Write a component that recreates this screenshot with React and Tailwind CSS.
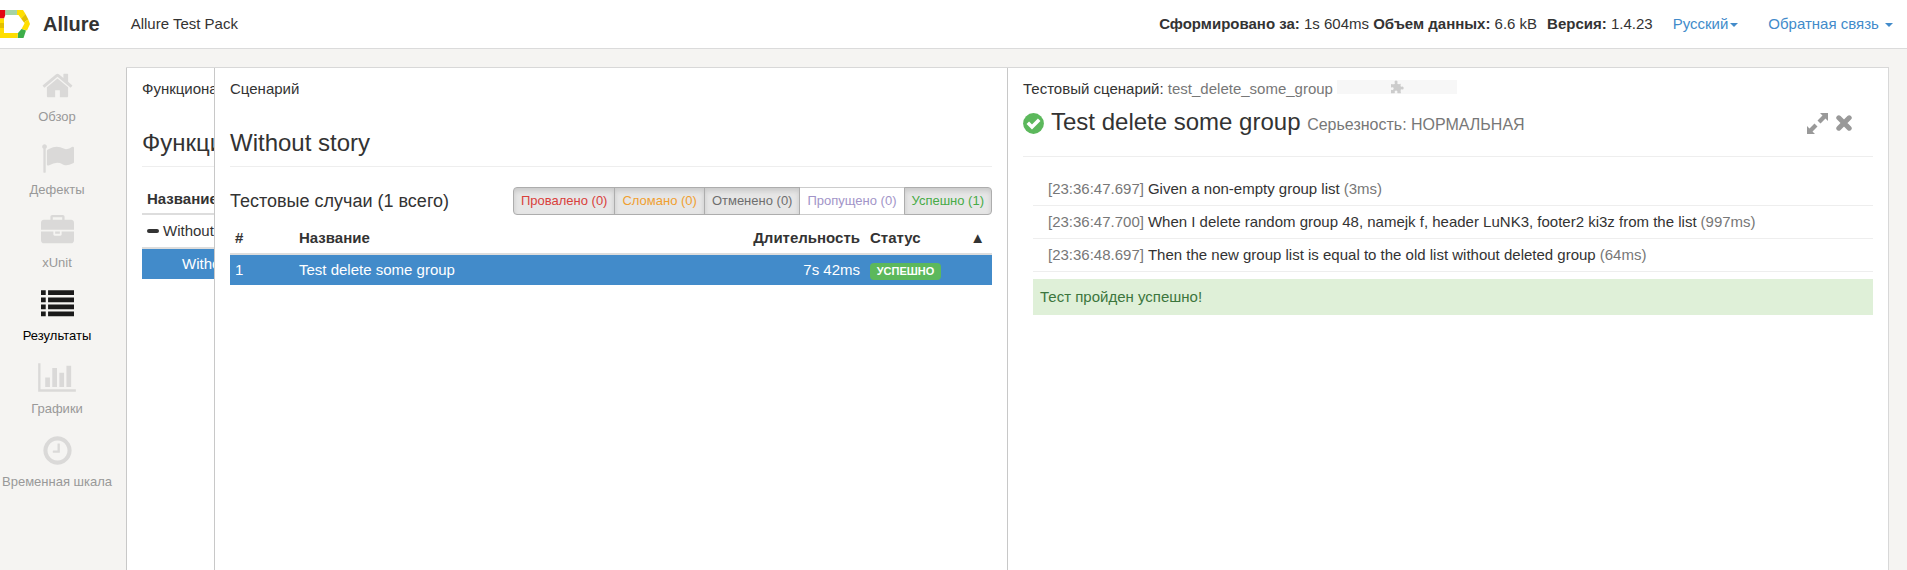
import React from "react";

const HOME = "M1472 992v480q0 26-19 45t-45 19h-384v-384h-256v384h-384q-26 0-45-19t-19-45v-480q0-1 .5-3t.5-3l575-474 575 474q1 2 1 6zm223-69l-62 74q-8 9-21 11h-3q-13 0-21-7l-692-577-692 577q-12 8-24 7-13-2-21-11l-62-74q-8-10-7-23.5t11-21.5l719-599q32-26 76-26t76 26l244 204v-195q0-14 9-23t23-9h192q14 0 23 9t9 23v408l219 182q10 8 11 21.5t-7 23.5z";
const FLAG = "M320 256q0 72-64 110v1266q0 13-9.5 22.5t-22.5 9.5h-64q-13 0-22.5-9.5t-9.5-22.5v-1266q-64-38-64-110 0-53 37.5-90.5t90.5-37.5 90.5 37.5 37.5 90.5zm1472 64v763q0 25-12.5 38.5t-39.5 27.5q-215 116-369 116-61 0-123.5-22t-108.5-48-115.5-48-142.5-22q-192 0-464 146-17 9-33 9-26 0-45-19t-19-45v-742q0-32 31-55 21-14 79-43 236-120 421-120 107 0 200 29t219 88q38 19 88 19 54 0 117.5-21t110-47 88-47 54.5-21q26 0 45 19t19 45z";
const CASE = "M640 256h512v-128h-512v128zm1152 640v480q0 66-47 113t-113 47h-1472q-66 0-113-47t-47-113v-480h672v160q0 26 19 45t45 19h320q26 0 45-19t19-45v-160h672zm-768 0v128h-256v-128h256zm768-480v384h-1792v-384q0-66 47-113t113-47h352v-160q0-40 28-68t68-28h576q40 0 68 28t28 68v160h352q66 0 113 47t47 113z";
const LIST = "M0 128h256v256h-256zM384 128h1408v256h-1408zM0 512h256v256h-256zM384 512h1408v256h-1408zM0 896h256v256h-256zM384 896h1408v256h-1408zM0 1280h256v256h-256zM384 1280h1408v256h-1408z";
const CHART = "M640 896v512h-256v-512h256zm384-512v1024h-256v-1024h256zm1024 1152v128h-2048v-1536h128v1408h1920zm-640-896v768h-256v-768h256zm384-384v1152h-256v-1152h256z";
const CLOCK = "M1024 544v448q0 14-9 23t-23 9h-320q-14 0-23-9t-9-23v-64q0-14 9-23t23-9h224v-352q0-14 9-23t23-9h64q14 0 23 9t9 23zm416 352q0-148-73-273t-198-198-273-73-273 73-198 198-73 273 73 273 198 198 273 73 273-73 198-198 73-273zm224 0q0 209-103 385.5t-279.5 279.5-385.5 103-385.5-103-279.5-279.5-103-385.5 103-385.5 279.5-279.5 385.5-103 385.5 103 279.5 279.5 103 385.5z";

const NAV = [
  { label: "Обзор", d: HOME },
  { label: "Дефекты", d: FLAG },
  { label: "xUnit", d: CASE },
  { label: "Результаты", d: LIST, active: true },
  { label: "Графики", d: CHART, wide: true },
  { label: "Временная шкала", d: CLOCK },
];

const FILTERS = [
  { label: "Провалено (0)", color: "text-[#d9403b]", on: true },
  { label: "Сломано (0)", color: "text-[#f0a030]", on: true },
  { label: "Отменено (0)", color: "text-[#6e6e6e]", on: true },
  { label: "Пропущено (0)", color: "text-[#a294c8]", on: false },
  { label: "Успешно (1)", color: "text-[#47ab47]", on: true },
];

const STEPS = [
  { time: "[23:36:47.697]", text: "Given a non-empty group list", took: "(3ms)" },
  { time: "[23:36:47.700]", text: "When I delete random group 48, namejk f, header LuNK3, footer2 ki3z from the list", took: "(997ms)" },
  { time: "[23:36:48.697]", text: "Then the new group list is equal to the old list without deleted group", took: "(64ms)" },
];

function Logo() {
  return (
    <svg className="h-7 w-[30px] shrink-0" viewBox="0 0 30 28" aria-hidden="true">
      <path d="M0 0H5.500V4.500L4 8.500H0Z" fill="#e30613" />
      <path d="M5.500 0H17V5H5Z" fill="#a5d3a5" />
      <path d="M17 0H23L25.500 4L21 8.500L18.500 5H17Z" fill="#ffde00" />
      <path d="M25.500 4L28.300 9.500L24 12.500L21 8.500Z" fill="#e3c000" />
      <path d="M28.300 9.500L30 14L27 20.500L21.500 19L24.500 13.500L24 12.500Z" fill="#ffde00" />
      <path d="M21.500 19L26 20.500L23.500 28H17.500L18 23Z" fill="#3dae49" />
      <path d="M0 8.500H4V23H18L17.500 28H0Z" fill="#ffde00" />
      <path d="M0 13H4V18H0Z" fill="#e3c000" />
    </svg>
  );
}

function Caret() {
  return (
    <svg className="ml-0.5 inline-block h-1 w-2 align-middle" viewBox="0 0 8 4" fill="currentColor" aria-hidden="true">
      <path d="M0 0H8L4 4Z" />
    </svg>
  );
}

function Header() {
  return (
    <header className="flex h-[49px] shrink-0 items-center border-b border-[#dbdbdb] bg-white">
      <Logo />
      <a href="#home" className="ml-[13px] text-xl font-bold leading-6">Allure</a>
      <span className="ml-[31px]">Allure Test Pack</span>
      <div className="ml-auto flex whitespace-pre pr-[14px]">
        <span><b>Сформировано за:</b> 1s 604ms </span>
        <span><b>Объем данных:</b> 6.6 kB</span>
        <span className="ml-[10px]"><b>Версия:</b> 1.4.23</span>
        <button type="button" className="ml-5 text-[#428bca]">Русский<Caret /></button>
        <button type="button" className="ml-[30px] text-[#428bca]">Обратная связь <Caret /></button>
      </div>
    </header>
  );
}

function Sidebar() {
  return (
    <nav className="w-[126px] shrink-0 pt-5">
      <ul>
        {NAV.map((n) => (
          <li key={n.label} className="h-[73px]">
            <a href="#tab" className="flex w-[114px] flex-col items-center">
              <svg
                className={(n.wide ? "w-[38px]" : "w-[33px]") + " h-[33px] " + (n.active ? "text-[#1a1a1a]" : "text-[#dad9d8]")}
                viewBox={n.wide ? "0 0 2048 1792" : "0 0 1792 1792"}
                fill="currentColor"
                aria-hidden="true"
              >
                <path d={n.d} transform={n.d === HOME || n.d === CLOCK ? "translate(0 0)" : undefined} />
              </svg>
              <span className={"mt-1.5 whitespace-nowrap text-[13px] leading-[18px] " + (n.active ? "text-black" : "text-[#999]")}>{n.label}</span>
            </a>
          </li>
        ))}
      </ul>
    </nav>
  );
}

function FeaturePane() {
  return (
    <section className="w-[88px] shrink-0 overflow-hidden whitespace-nowrap border-l border-[#c8c8c8] pl-[15px] pt-[11px]">
      <div className="w-80">
        <p>Функциональность</p>
        <h2 className="mt-[31px] border-b border-[#eee] pb-[10px] text-2xl leading-[26px]">Функциональность</h2>
        <table className="mt-[17px] w-full border-collapse">
          <thead>
            <tr className="h-[30px] border-b-2 border-[#ddd]">
              <th className="px-[5px] text-left">Название</th>
            </tr>
          </thead>
          <tbody>
            <tr className="h-[34px] border-b-2 border-[#ddd]">
              <td className="px-[5px]">
                <span className="flex items-center gap-1">
                  <span className="h-1 w-3 rounded-sm bg-[#333]" />
                  Without feature
                </span>
              </td>
            </tr>
            <tr className="h-[31px] bg-[#428bca] text-white">
              <td className="pl-10">Without story</td>
            </tr>
          </tbody>
        </table>
      </div>
    </section>
  );
}

function StoryPane() {
  return (
    <section className="w-[793px] min-w-0 border-l border-[#c8c8c8] px-[15px] pt-[11px]">
      <p>Сценарий</p>
      <h2 className="mt-[31px] border-b border-[#eee] pb-[10px] text-2xl leading-[26px]">Without story</h2>
      <div className="mt-5 flex items-center justify-between">
        <h3 className="text-lg leading-7">Тестовые случаи (1 всего)</h3>
        <div className="flex whitespace-nowrap">
          {FILTERS.map((f) => (
            <button
              key={f.label}
              type="button"
              aria-pressed={f.on}
              className={
                "-ml-px h-7 border px-[7px] text-[13px] leading-[18px] first:ml-0 first:rounded-l last:rounded-r " +
                (f.on ? "relative z-10 border-[#adadad] bg-[#e6e6e6] shadow-[inset_0_3px_5px_rgba(0,0,0,0.125)] " : "border-[#ccc] bg-white ") +
                f.color
              }
            >
              {f.label}
            </button>
          ))}
        </div>
      </div>
      <table className="mt-[7px] w-full table-fixed border-collapse">
        <thead>
          <tr className="h-8 border-b-2 border-[#ddd] text-left">
            <th className="w-16 px-[5px]">#</th>
            <th className="px-[5px]">Название</th>
            <th className="w-40 px-[5px] text-right">Длительность</th>
            <th className="w-[127px] px-[5px]">
              <span className="flex justify-between pr-0.5">Статус<span>▲</span></span>
            </th>
          </tr>
        </thead>
        <tbody>
          <tr className="h-[31px] bg-[#428bca] text-white">
            <td className="px-[5px]">1</td>
            <td className="px-[5px]">Test delete some group</td>
            <td className="px-[5px] text-right">7s 42ms</td>
            <td className="px-[5px]">
              <span className="mt-0.5 block w-[71px] rounded bg-[#5cb85c] text-center text-[11px] font-bold leading-[17px]">УСПЕШНО</span>
            </td>
          </tr>
        </tbody>
      </table>
    </section>
  );
}

function TestPane() {
  return (
    <section className="min-w-0 flex-1 border-l border-[#c8c8c8] px-[15px] pt-[11px]">
      <p className="flex items-start whitespace-pre">
        Тестовый сценарий: <span className="text-[#777]">test_delete_some_group</span>
        <span className="ml-1 mt-px flex h-[14px] w-[120px] justify-center bg-[#f7f7f7]">
          <svg className="h-[14px] w-[14px] text-[#ccc]" viewBox="0 0 14 14" fill="currentColor" aria-hidden="true">
            <path d="M1 4Q3 4.600 4.600 4Q5.200 3.600 4.600 2.600Q4.200 0.600 6 0.500Q8 0.600 7.500 2.600Q7 3.700 7.800 4Q9.400 4.400 10.800 3.800Q10.300 5.800 10.800 6.600Q11.200 7 12 6.500Q13.600 6.200 13.700 8Q13.600 9.900 12 9.500Q11 9 10.700 9.800Q10.400 11.500 11 13.300H7.600Q7 12.800 7.400 12Q7.800 10.700 6.100 10.500Q4.300 10.700 4.700 12Q5.200 12.900 4.600 13.300H1V10Q1.600 9.600 2.300 10Q3.600 10.200 3.700 8.600Q3.500 7 2.300 7.300Q1.500 7.700 1 7.200Z" />
          </svg>
        </span>
      </p>
      <div className="mt-[10px] flex items-center border-b border-[#eee] pb-[19px]">
        <svg className="h-[21px] w-[21px]" viewBox="0 0 21 21" aria-hidden="true">
          <circle cx="10.500" cy="10.500" r="10.400" fill="#5cb85c" />
          <path d="M4.800 9.800L9 14L16.200 6.800" fill="none" stroke="white" strokeWidth="3.600" />
        </svg>
        <h2 className="ml-[7px] text-2xl leading-[26px]">
          Test delete some group <small className="text-base text-[#777]">Серьезность: НОРМАЛЬНАЯ</small>
        </h2>
        <button type="button" aria-label="Развернуть" className="ml-auto text-[#999]">
          <svg className="h-[21px] w-[21px]" viewBox="0 0 21 21" fill="currentColor" aria-hidden="true">
            <path d="M13 0H21V8L18.500 5.500L13.500 10.500L10.500 7.500L15.500 2.500ZM0 21V13L2.500 15.500L7.500 10.500L10.500 13.500L5.500 18.500L8 21Z" />
          </svg>
        </button>
        <button type="button" aria-label="Закрыть" className="ml-2 mr-[21px] text-[#999]">
          <svg className="h-4 w-4" viewBox="0 0 16 16" fill="none" stroke="currentColor" strokeWidth="5" strokeLinecap="round" aria-hidden="true">
            <path d="M2.800 2.800L13.200 13.200M13.200 2.800L2.800 13.200" />
          </svg>
        </button>
      </div>
      <div className="mt-4 pl-[10px]">
        <ul>
          {STEPS.map((s) => (
            <li key={s.time} className="flex h-[33px] items-center gap-1 border-b border-[#eee] pl-[15px]">
              <span className="text-[#777]">{s.time}</span>
              <span>{s.text}</span>
              <span className="text-[#777]">{s.took}</span>
            </li>
          ))}
        </ul>
        <p className="mt-[7px] bg-[#dff0d8] px-[7px] py-2 text-[#3c763d]">Тест пройден успешно!</p>
      </div>
    </section>
  );
}

export default function App() {
  return (
    <div className="flex min-h-screen flex-col bg-[#f5f4f2] font-['Liberation_Sans',Arial,sans-serif] text-[15px] leading-5 text-[#333]">
      <Header />
      <div className="flex flex-1">
        <Sidebar />
        <main className="mr-[18px] mt-[18px] flex min-w-0 flex-1 border-r border-t border-[#d8d8d8] bg-white">
          <FeaturePane />
          <StoryPane />
          <TestPane />
        </main>
      </div>
    </div>
  );
}
